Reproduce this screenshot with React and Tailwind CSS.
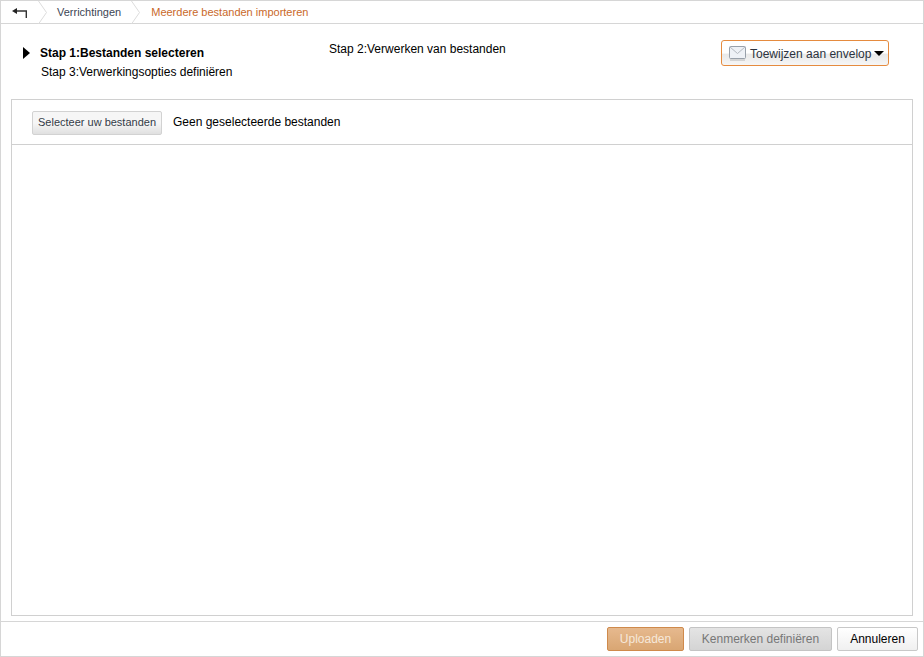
const font = { fontFamily: '"Liberation Sans", Arial, sans-serif' }

// chevron separator in the breadcrumb
function Chevron() {
  return (
    <svg width="14" height="23" viewBox="0 0 14 23" className="shrink-0">
      <path d="M0.5 0 L8.5 11.5 L0.5 23" fill="none" stroke="#dcdcdc" strokeWidth="1" />
    </svg>
  )
}

function BackIcon() {
  return (
    <svg width="16" height="10" viewBox="0 0 16 10" className="shrink-0">
      <path d="M4 3 H14.3 V10" fill="none" stroke="#333" strokeWidth="1.4" />
      <path d="M0 3 L5 0 V6 Z" fill="#222" />
    </svg>
  )
}

function EnvelopeIcon() {
  return (
    <svg width="18" height="15" viewBox="0 0 18 15" className="shrink-0">
      <rect x="1" y="12" width="15" height="3" fill="#d4d4d4" />
      <rect x="0.5" y="0.5" width="16" height="12" rx="1" fill="#eef1f6" stroke="#98a0aa" />
      <path d="M1 1 L8.5 7.5 L16 1" fill="none" stroke="#b4b9c0" />
    </svg>
  )
}

export default function App() {
  return (
    <div style={font} className="flex h-[657px] w-[924px] flex-col overflow-hidden border border-[#d6d6d6] bg-white text-black">
      {/* Breadcrumb */}
      <header className="flex h-[23px] shrink-0 items-center border-b border-[#d6d6d6] text-[11px]">
        <div className="flex w-[37px] shrink-0 justify-center pl-[1px] pt-[1px]">
          <BackIcon />
        </div>
        <Chevron />
        <span className="ml-[5px] text-[#3c4654]">Verrichtingen</span>
        <span className="ml-[10px]"><Chevron /></span>
        <span className="ml-[6px] text-[#c9682a]">Meerdere bestanden importeren</span>
      </header>

      {/* Stappen */}
      <div className="flex h-[75px] shrink-0 text-xs">
        <div className="w-[328px] shrink-0 pt-[20px]">
          <div className="flex h-[18px] items-center font-bold">
            <span className="ml-[22px] mr-[10px] h-0 w-0 border-y-[6px] border-l-[7px] border-y-transparent border-l-black" />
            Stap 1:Bestanden selecteren
          </div>
          <div className="ml-[40px] mt-[1px] h-[18px] leading-[18px]">Stap 3:Verwerkingsopties definiëren</div>
        </div>
        <div className="flex-1 pt-[16px] leading-[18px]">Stap 2:Verwerken van bestanden</div>
        <div className="mr-[34px] pt-[16px]">
          <button className="flex h-[26px] w-[168px] items-center whitespace-nowrap rounded-[3px] border border-[#e58b3f] bg-gradient-to-b from-white from-50% via-[#e9e9e9] via-55% to-[#f6f6f6] pl-[7px] text-xs text-[#2c3340]">
            <EnvelopeIcon />
            <span className="ml-[3px] pt-[1px]">Toewijzen aan envelop</span>
            <span className="ml-[3px] h-0 w-0 border-x-[5px] border-t-[5px] border-x-transparent border-t-black" />
          </button>
        </div>
      </div>

      {/* Bestanden */}
      <main className="mx-[10px] flex min-h-0 flex-1 flex-col border border-[#d0d0d0]">
        <div className="flex h-[45px] shrink-0 items-center border-b border-[#d0d0d0] pl-[20px] pt-[1px] text-xs">
          <button className="h-[24px] w-[130px] whitespace-nowrap rounded-[2px] border border-[#d2d2d2] bg-gradient-to-b from-[#f6f6f6] from-50% to-[#e0e0e0] text-[11px] text-[#333b47]">
            Selecteer uw bestanden
          </button>
          <span className="relative top-[-1px] ml-[11px]">Geen geselecteerde bestanden</span>
        </div>
        <div className="flex-1" />
      </main>

      {/* Acties */}
      <footer className="mt-[5px] flex h-[35px] shrink-0 items-center justify-end gap-[5px] border-t border-[#d6d6d6] pr-[5px] text-xs">
        <button className="h-[24px] w-[77px] rounded-[2px] border border-[#cf8a4c] bg-gradient-to-b from-[#e6b98e] to-[#d9a673] text-[#f6e8da]">
          Uploaden
        </button>
        <button className="h-[24px] w-[143px] rounded-[2px] border border-[#c4c4c4] bg-gradient-to-b from-[#e4e4e4] to-[#d4d4d4] text-[#777]">
          Kenmerken definiëren
        </button>
        <button className="h-[24px] w-[81px] rounded-[2px] border border-[#c8c8c8] bg-gradient-to-b from-white to-[#f0f0f0] text-black">
          Annuleren
        </button>
      </footer>
    </div>
  )
}
